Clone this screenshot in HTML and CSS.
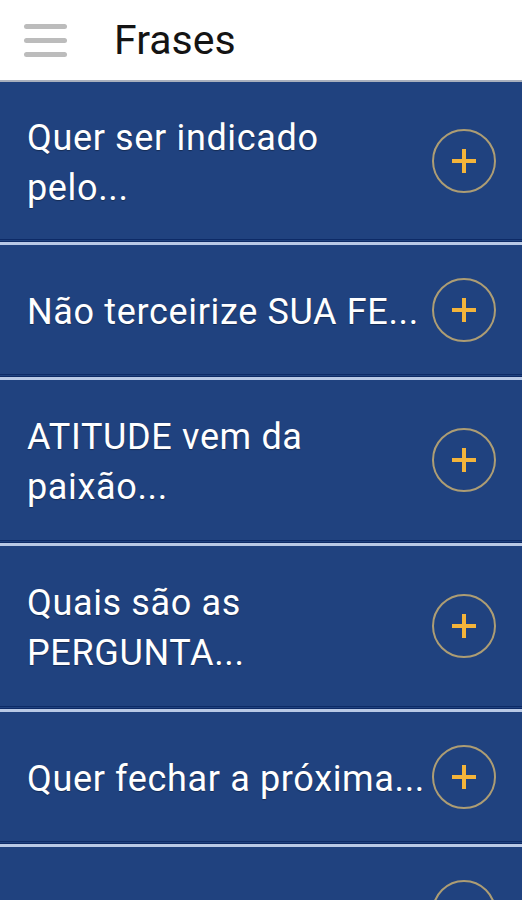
FILE: index.html
```html
<!DOCTYPE html>
<html lang="pt">
<head>
    <meta charset="UTF-8">
    <meta name="viewport" content="width=device-width, initial-scale=1.0">
    <title>Frases</title>
    <link rel="stylesheet" href="styles.css">
</head>
<body>
    <header class="topbar">
        <div class="menu-btn">
            <span></span>
            <span></span>
            <span></span>
        </div>
        <h1 class="title">Frases</h1>
    </header>

    <ul class="phrase-list">
        <li class="phrase first">
            <span class="phrase-text">Quer ser indicado<br>pelo...</span>
            <span class="plus"></span>
        </li>
        <li class="phrase">
            <span class="phrase-text">Não terceirize SUA FE...</span>
            <span class="plus"></span>
        </li>
        <li class="phrase">
            <span class="phrase-text">ATITUDE vem da<br>paixão...</span>
            <span class="plus"></span>
        </li>
        <li class="phrase">
            <span class="phrase-text">Quais são as<br>PERGUNTA...</span>
            <span class="plus"></span>
        </li>
        <li class="phrase">
            <span class="phrase-text">Quer fechar a próxima...</span>
            <span class="plus"></span>
        </li>
        <li class="phrase">
            <span class="phrase-text"></span>
            <span class="plus"></span>
        </li>
    </ul>
</body>
</html>
```

FILE: styles.css
```css
body {
    margin: 0;
    padding: 0;
    font-family: Roboto, "Liberation Sans", Arial, sans-serif;
    background-color: #20427f;
    overflow: hidden;
}

.topbar {
    display: flex;
    align-items: center;
    height: 80px;
    background-color: #fff;
    border-bottom: 2px solid #a9b0bd;
}

.menu-btn {
    display: flex;
    flex-direction: column;
    gap: 9px;
    width: 43px;
    margin-left: 24px;
}

.menu-btn span {
    display: block;
    height: 5px;
    border-radius: 3px;
    background-color: #bcbcbc;
}

.title {
    margin: 0 0 0 47px;
    font-size: 41px;
    font-weight: normal;
    color: #141414;
}

.phrase-list {
    list-style: none;
    margin: 0;
    padding: 0;
}

.phrase {
    display: flex;
    align-items: center;
    justify-content: space-between;
    min-height: 134px;
    padding: 3px 26px 0 27px;
    margin-top: 1px;
    box-sizing: border-box;
    border-top: 1px solid #0d2a66;
    border-bottom: 1px solid #0d2a66;
    box-shadow: inset 0 3px 0 #b9c9e6;
}

.phrase.first {
    min-height: 158px;
    padding-top: 0;
    margin-top: 0;
    border-top: none;
    box-shadow: none;
}

.phrase-text {
    padding: 32px 0 28px;
    font-size: 36px;
    line-height: 50px;
    letter-spacing: 0.65px;
    color: #fff;
    white-space: nowrap;
    text-shadow: 0 1px 1px rgba(0, 0, 0, 0.35);
}

.first .phrase-text {
    padding: 30px 0 26px;
}

.plus {
    position: relative;
    flex-shrink: 0;
    width: 60px;
    height: 60px;
    margin-left: 4px;
    border: 2px solid #ad9d74;
    border-radius: 50%;
}

.plus::before,
.plus::after {
    content: "";
    position: absolute;
    left: 50%;
    top: 50%;
    background-color: #f4b43a;
}

.plus::before {
    width: 24px;
    height: 4px;
    margin: -2px 0 0 -12px;
}

.plus::after {
    width: 4px;
    height: 24px;
    margin: -12px 0 0 -2px;
}
```
